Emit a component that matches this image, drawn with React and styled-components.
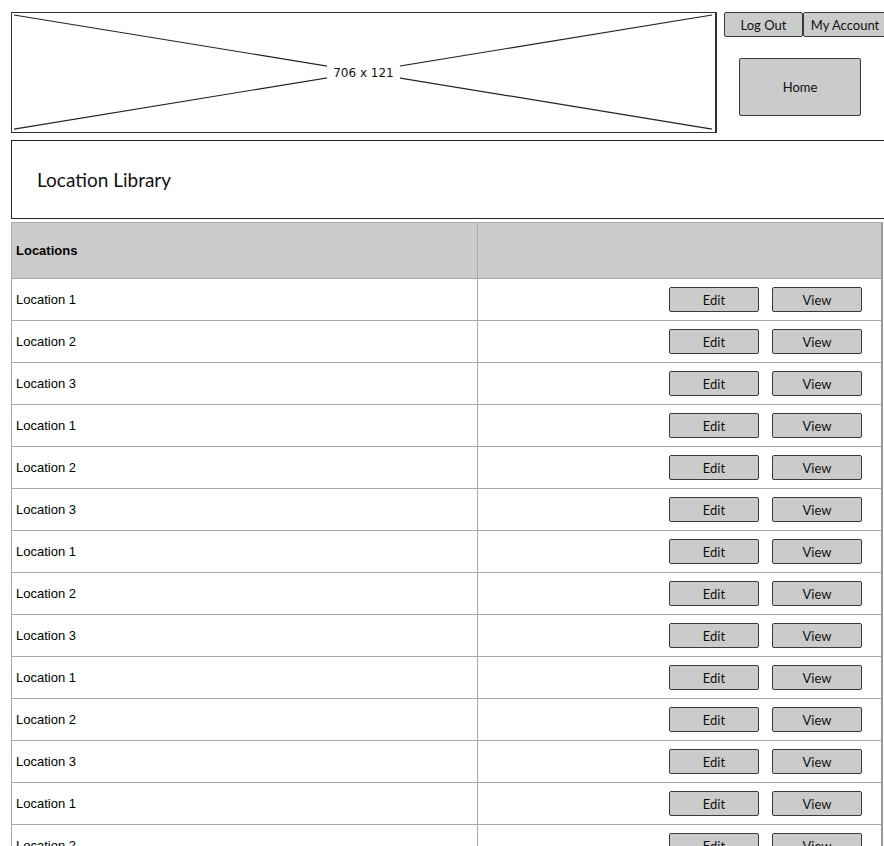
import React from "react";
import styled, { createGlobalStyle } from "styled-components";

const Global = createGlobalStyle`
  html, body { margin: 0; padding: 0; background: #fff; }
  body { width: 884px; overflow: hidden; font-family: "Liberation Sans", Arial, sans-serif; }
`;

const sketch = `"Lato", "Open Sans", sans-serif`;

const Page = styled.div`
  width: 884px;
  height: 846px;
  overflow: hidden;
  padding-top: 12px;
  box-sizing: border-box;
`;

const TopBar = styled.div`
  display: flex;
  align-items: flex-start;
  padding-left: 11px;
  gap: 7px;
`;

const Placeholder = styled.div`
  position: relative;
  flex-shrink: 0;
  width: 706px;
  height: 121px;
  box-sizing: border-box;
  border: 1px solid #333;
  border-right-width: 2px;
  display: flex;
  align-items: center;
  justify-content: center;
`;

const Cross = styled.svg`
  position: absolute;
  inset: 0;
  width: 100%;
  height: 100%;
`;

const PlaceholderLabel = styled.span`
  position: relative;
  background: #fff;
  padding: 2px 6px;
  font-family: "DejaVu Sans", sans-serif;
  font-size: 12px;
  color: #111;
`;

const RightCol = styled.div`
  display: flex;
  flex-direction: column;
  align-items: flex-start;
  flex-shrink: 0;
`;

const TopButtons = styled.div`
  display: flex;
`;

const SketchButton = styled.button`
  box-sizing: border-box;
  flex-shrink: 0;
  width: ${(p) => p.$w}px;
  height: ${(p) => p.$h}px;
  background: #cbcbcb;
  border: 1px solid #3a3a3a;
  border-radius: 2px;
  font-family: ${sketch};
  font-size: 13px;
  color: #111;
  padding: 0;
  margin: 0;
  display: flex;
  align-items: center;
  justify-content: center;
`;

const HomeWrap = styled.div`
  padding: 21px 0 0 15px;
`;

const Header = styled.div`
  margin: 7px 0 0 11px;
  height: 79px;
  box-sizing: border-box;
  border: 1px solid #222;
  border-right: none;
  display: flex;
  align-items: center;
  padding-left: 25px;
  font-family: ${sketch};
  font-size: 19px;
  color: #111;
`;

const Table = styled.div`
  margin: 3px 0 0 11px;
  width: 872px;
  box-sizing: border-box;
  border-left: 1px solid #aaa;
  border-right: 2px solid #999;
  border-top: 1px solid #aaa;
`;

const Row = styled.div`
  display: grid;
  grid-template-columns: 466px 1fr;
  height: ${(p) => (p.$head ? 56 : 42)}px;
  box-sizing: border-box;
  border-bottom: 1px solid #aaa;
  background: ${(p) => (p.$head ? "#cccccc" : "#fff")};
`;

const NameCell = styled.div`
  display: flex;
  align-items: center;
  padding-left: 4px;
  border-right: 1px solid #aaa;
  font-size: 13px;
  font-weight: ${(p) => (p.$head ? 700 : 400)};
  color: #000;
`;

const ActionCell = styled.div`
  display: flex;
  align-items: center;
  justify-content: flex-end;
  gap: 13px;
  padding-right: 19px;
`;

const names = ["Location 1", "Location 2", "Location 3"];
const rows = Array.from({ length: 14 }, (_, i) => names[i % 3]);

export default function App() {
  return (
    <>
      <Global />
      <Page>
        <TopBar>
          <Placeholder>
            <Cross viewBox="0 0 706 121" preserveAspectRatio="none">
              <line x1="2" y1="2" x2="703" y2="118" stroke="#222" strokeWidth="1.2" />
              <line x1="2" y1="118" x2="703" y2="2" stroke="#222" strokeWidth="1.2" />
            </Cross>
            <PlaceholderLabel>706 x 121</PlaceholderLabel>
          </Placeholder>
          <RightCol>
            <TopButtons>
              <SketchButton $w={79} $h={25}>Log Out</SketchButton>
              <SketchButton $w={84} $h={25}>My Account</SketchButton>
            </TopButtons>
            <HomeWrap>
              <SketchButton $w={122} $h={58}>Home</SketchButton>
            </HomeWrap>
          </RightCol>
        </TopBar>
        <Header>Location Library</Header>
        <Table>
          <Row $head>
            <NameCell $head>Locations</NameCell>
            <div />
          </Row>
          {rows.map((n, i) => (
            <Row key={i}>
              <NameCell>{n}</NameCell>
              <ActionCell>
                <SketchButton $w={90} $h={25}>Edit</SketchButton>
                <SketchButton $w={90} $h={25}>View</SketchButton>
              </ActionCell>
            </Row>
          ))}
        </Table>
      </Page>
    </>
  );
}
